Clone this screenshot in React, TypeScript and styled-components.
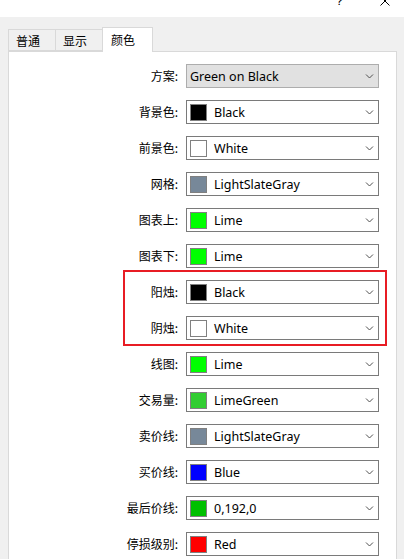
import React from "react";
import styled, { createGlobalStyle } from "styled-components";

const Global = createGlobalStyle`
  html, body { margin: 0; padding: 0; background: #f0f0f0; overflow: hidden; }
  body { font-family: "Noto Sans", "Noto Sans CJK SC", sans-serif; font-size: 12px; color: #000; }
`;

const Window = styled.div`
  width: 404px;
  height: 559px;
  display: flex;
  flex-direction: column;
  background: #f0f0f0;
  overflow: hidden;
`;

const TitleBar = styled.div`
  height: 17px;
  background: #fff;
  display: flex;
  justify-content: flex-end;
  align-items: flex-start;
  overflow: hidden;
  flex-shrink: 0;
`;

const HelpGlyph = styled.span`
  font-family: "Liberation Sans", sans-serif;
  font-size: 13px;
  line-height: 13px;
  margin-top: -6px;
  margin-right: 37px;
  color: #000;
`;

const CloseIcon = styled.svg`
  width: 10px;
  height: 10px;
  margin-top: -4px;
  margin-right: 14px;
`;

const Body = styled.div`
  padding: 10px 7px 0 8px;
  display: flex;
  flex-direction: column;
`;

const TabStrip = styled.div`
  display: flex;
  align-items: flex-end;
  height: 24px;
  position: relative;
  z-index: 1;
`;

const Tab = styled.div<{ $active?: boolean }>`
  font-family: "Noto Sans CJK SC", sans-serif;
  font-size: 12px;
  box-sizing: border-box;
  height: ${(p) => (p.$active ? "25px" : "22px")};
  padding: ${(p) => (p.$active ? "3px 0 0 8px" : "2px 0 0 7px")};
  width: ${(p) => (p.$active ? "51px" : "48px")};
  margin-right: ${(p) => (p.$active ? "0" : "-1px")};
  background: ${(p) => (p.$active ? "#fff" : "#f0f0f0")};
  border: 1px solid #d9d9d9;
  border-bottom: ${(p) => (p.$active ? "none" : "1px solid #d9d9d9")};
  margin-bottom: ${(p) => (p.$active ? "-1px" : "0")};
  line-height: 17px;
`;

const Panel = styled.div`
  background: #fff;
  border: 1px solid #d9d9d9;
  height: 600px;
  box-sizing: border-box;
  padding-top: 12px;
  display: flex;
  flex-direction: column;
  gap: 12px;
`;

const Row = styled.div`
  display: grid;
  grid-template-columns: 169px 193px;
  column-gap: 8px;
  align-items: center;
  height: 24px;
`;

const Label = styled.div`
  font-family: "Noto Sans CJK SC", sans-serif;
  font-size: 12px;
  text-align: right;
  line-height: 24px;
  white-space: nowrap;
`;

const Combo = styled.div<{ $button?: boolean }>`
  box-sizing: border-box;
  height: 24px;
  border: 1px solid ${(p) => (p.$button ? "#adadad" : "#7a7a7a")};
  background: ${(p) => (p.$button ? "#e1e1e1" : "#fff")};
  display: flex;
  align-items: center;
  padding: 0 4px 0 3px;
`;

const Swatch = styled.span<{ $color: string }>`
  box-sizing: border-box;
  width: 17px;
  height: 17px;
  border: 1px solid #808080;
  background: ${(p) => p.$color};
  margin-right: 7px;
  flex-shrink: 0;
`;

const Value = styled.span`
  flex: 1;
  font-family: "Noto Sans", sans-serif;
  font-size: 12.5px;
  white-space: nowrap;
`;

const Chevron = styled.svg`
  width: 9px;
  height: 6px;
  flex-shrink: 0;
`;

const Highlight = styled.div`
  position: relative;
  display: flex;
  flex-direction: column;
  gap: 12px;
  &::after {
    content: "";
    position: absolute;
    left: 114px;
    top: -10px;
    width: 264px;
    height: 76px;
    box-sizing: border-box;
    border: 2px solid #e81c24;
    pointer-events: none;
  }
`;

type Item = { label: string; value: string; color?: string };

const Arrow = () => (
  <Chevron viewBox="0 0 9 6">
    <path d="M1 1.5 L4.5 5 L8 1.5" fill="none" stroke="#505050" strokeWidth="1" />
  </Chevron>
);

const FieldRow = ({ label, value, color }: Item) => (
  <Row>
    <Label>{label}</Label>
    <Combo $button={!color}>
      {color && <Swatch $color={color} />}
      <Value>{value}</Value>
      <Arrow />
    </Combo>
  </Row>
);

const before: Item[] = [
  { label: "方案:", value: "Green on Black" },
  { label: "背景色:", value: "Black", color: "#000000" },
  { label: "前景色:", value: "White", color: "#ffffff" },
  { label: "网格:", value: "LightSlateGray", color: "#778899" },
  { label: "图表上:", value: "Lime", color: "#00ff00" },
  { label: "图表下:", value: "Lime", color: "#00ff00" },
];

const candles: Item[] = [
  { label: "阳烛:", value: "Black", color: "#000000" },
  { label: "阴烛:", value: "White", color: "#ffffff" },
];

const after: Item[] = [
  { label: "线图:", value: "Lime", color: "#00ff00" },
  { label: "交易量:", value: "LimeGreen", color: "#32cd32" },
  { label: "卖价线:", value: "LightSlateGray", color: "#778899" },
  { label: "买价线:", value: "Blue", color: "#0000ff" },
  { label: "最后价线:", value: "0,192,0", color: "#00c000" },
  { label: "停损级别:", value: "Red", color: "#ff0000" },
];

export default function App() {
  return (
    <>
      <Global />
      <Window>
        <TitleBar>
          <HelpGlyph>?</HelpGlyph>
          <CloseIcon viewBox="0 0 10 10">
            <path d="M0.5 0.5 L9.5 9.5 M9.5 0.5 L0.5 9.5" stroke="#000" strokeWidth="1" />
          </CloseIcon>
        </TitleBar>
        <Body>
          <TabStrip>
            <Tab>普通</Tab>
            <Tab>显示</Tab>
            <Tab $active>颜色</Tab>
          </TabStrip>
          <Panel>
            {before.map((it, i) => (
              <FieldRow key={"b" + i} {...it} />
            ))}
            <Highlight>
              {candles.map((it, i) => (
                <FieldRow key={"c" + i} {...it} />
              ))}
            </Highlight>
            {after.map((it, i) => (
              <FieldRow key={"a" + i} {...it} />
            ))}
          </Panel>
        </Body>
      </Window>
    </>
  );
}
